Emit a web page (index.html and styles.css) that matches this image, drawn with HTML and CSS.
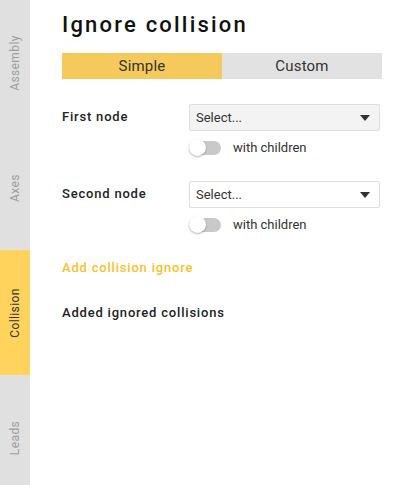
FILE: index.html
```html
<!DOCTYPE html>
<html>
<head>
<meta charset="utf-8">
<link rel="stylesheet" href="styles.css">
</head>
<body>
<div class="app">
  <nav class="sidebar">
    <div class="tab"><span>Assembly</span></div>
    <div class="tab"><span>Axes</span></div>
    <div class="tab active"><span>Collision</span></div>
    <div class="tab"><span>Leads</span></div>
  </nav>
  <main class="content">
    <h1 class="title">Ignore collision</h1>
    <div class="segmented">
      <div class="seg active">Simple</div>
      <div class="seg">Custom</div>
    </div>
    <div class="field first">
      <div class="label">First node</div>
      <div class="controls">
        <div class="select"><span>Select...</span><span class="caret"></span></div>
        <div class="toggle-row"><span class="toggle"><span class="knob"></span></span><span class="toggle-text">with children</span></div>
      </div>
    </div>
    <div class="field second">
      <div class="label">Second node</div>
      <div class="controls">
        <div class="select"><span>Select...</span><span class="caret"></span></div>
        <div class="toggle-row"><span class="toggle"><span class="knob"></span></span><span class="toggle-text">with children</span></div>
      </div>
    </div>
    <div class="add">Add collision ignore</div>
    <div class="added">Added ignored collisions</div>
  </main>
</div>
</body>
</html>
```
FILE: styles.css
```css
* { box-sizing: border-box; }
html, body { margin: 0; padding: 0; height: 100%; overflow: hidden; background: #fff; }
body { font-family: Roboto, "Liberation Sans", sans-serif; color: #222; }
.app { display: flex; height: 485px; }
.sidebar { width: 30px; flex: none; background: #e0e0e0; display: flex; flex-direction: column; }
.tab { height: 125px; flex: none; display: flex; align-items: center; justify-content: center; }
.tab span { transform: rotate(-90deg); white-space: nowrap; font-size: 12px; color: #9e9e9e; letter-spacing: 0.4px; }
.tab.active { background: #ffd35c; }
.tab.active span { color: #333; }
.content { flex: 1; padding: 0 25px 0 32px; }
.title { margin: 10px 0 0; font-size: 22px; font-weight: 500; letter-spacing: 2.2px; line-height: 30px; color: #111; }
.segmented { display: flex; margin-top: 13px; width: 320px; height: 26px; }
.seg { flex: 1; display: flex; align-items: center; justify-content: center; font-size: 15px; background: #e2e2e2; color: #333; letter-spacing: 0.2px; }
.seg.active { background: #f5c95c; }
.field { display: flex; align-items: flex-start; }
.field.first { margin-top: 25px; }
.field.second { margin-top: 25px; }
.label { width: 127px; font-size: 13px; font-weight: 500; letter-spacing: 0.8px; line-height: 26px; color: #222; }
.controls { width: 191px; }
.select { height: 27px; border: 1px solid #ddd; border-radius: 2px; background: #f3f3f3; display: flex; align-items: center; justify-content: space-between; padding: 0 9px 0 6px; font-size: 13px; color: #333; }
.field.second .select { background: #fff; }
.caret { width: 0; height: 0; border-left: 5px solid transparent; border-right: 5px solid transparent; border-top: 6px solid #333; }
.toggle-row { display: flex; align-items: center; margin-top: 8px; height: 17px; }
.toggle { position: relative; width: 32px; height: 14px; border-radius: 7px; background: #c9c9c9; flex: none; }
.knob { position: absolute; left: 0; top: -1.5px; width: 17px; height: 17px; border-radius: 50%; background: #fff; box-shadow: 0 1px 2px rgba(0,0,0,0.3); }
.toggle-text { margin-left: 12px; font-size: 13px; color: #333; }
.add { margin-top: 27px; font-size: 13px; font-weight: 500; color: #fbbf2a; letter-spacing: 0.8px; }
.added { margin-top: 30px; font-size: 13px; font-weight: 500; color: #222; letter-spacing: 0.8px; }
```
